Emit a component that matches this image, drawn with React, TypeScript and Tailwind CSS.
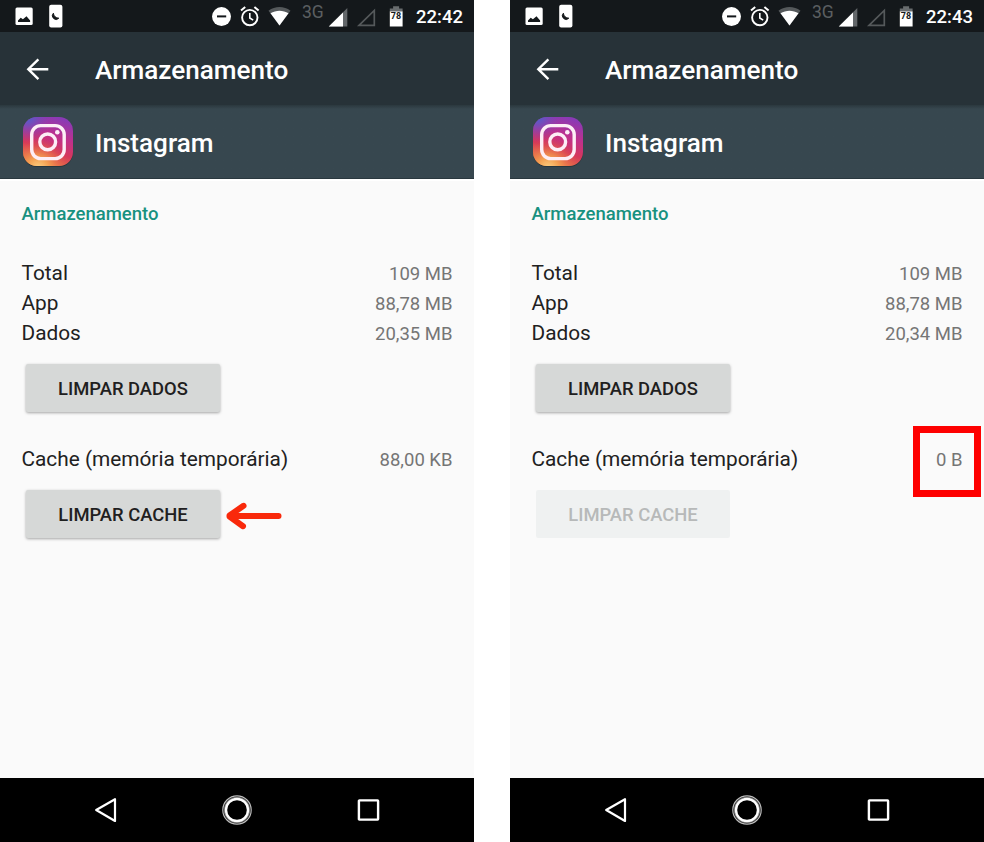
import clsx from 'clsx';

interface StorageInfo {
  time: string;
  total: string;
  app: string;
  data: string;
  cache: string;
  cacheEmpty: boolean;
}

const SCREENS: StorageInfo[] = [
  { time: '22:42', total: '109 MB', app: '88,78 MB', data: '20,35 MB', cache: '88,00 KB', cacheEmpty: false },
  { time: '22:43', total: '109 MB', app: '88,78 MB', data: '20,34 MB', cache: '0 B', cacheEmpty: true },
];

function StatusBar({ time }: { time: string }) {
  return (
    <div className="flex h-8 shrink-0 items-start bg-[#14181b] text-white">
      <svg className="ml-[15px] h-8 w-[18px]" viewBox="0 0 18 32">
        <rect x="0.5" y="7.5" width="17.2" height="17.5" rx="1.5" fill="#fff" />
        <path d="M3 22v-1.4l2.7-2.8 2.2 1.5 3.6-3 3.6 4.2V22z" fill="#14181b" />
      </svg>
      <svg className="ml-4 h-8 w-[14px]" viewBox="0 0 14 32">
        <rect x="0.2" y="4.8" width="13.2" height="22.6" rx="2" fill="#fff" />
        <path d="M4.4 13.2a3.5 3.5 0 0 0 5.4 5 5.3 5.3 0 0 1-5.4-5z" fill="#14181b" stroke="#14181b" strokeWidth="1" strokeLinejoin="round" />
      </svg>

      {/* Do not disturb */}
      <svg className="ml-[148px] h-8 w-5" viewBox="0 0 20 32">
        <circle cx="10.5" cy="16.6" r="9.5" fill="#fff" />
        <path d="M6 16.4h9.2" stroke="#14181b" strokeWidth="2" />
      </svg>
      {/* Alarm */}
      <svg className="ml-[9px] h-8 w-5" viewBox="0 0 20 32" fill="none" stroke="#fff">
        <circle cx="9.8" cy="17.6" r="7.7" strokeWidth="1.9" />
        <path d="M9.8 13v5l3.4 2.2" strokeWidth="1.6" />
        <path d="M1 10.6l4.2-3.5M18.6 10.6l-4.2-3.5" strokeWidth="2" />
      </svg>
      {/* Wi-Fi */}
      <svg className="ml-2 h-8 w-[23px]" viewBox="0 0 23 32">
        <path d="M0.5 10.8C7 5.8 16 5.8 22.5 10.8L11.5 25.6z" fill="#55595b" />
        <path d="M2.5 13.2C8 9.8 15 9.8 20.5 13.2L11.5 25.6z" fill="#fff" />
      </svg>
      <span className="ml-[11px] mt-[2px] w-[21px] text-[17.5px] leading-5 text-[#5b5f61]">3G</span>
      <svg className="ml-[5px] h-8 w-5" viewBox="0 0 20 32">
        <path d="M0.8 26.6L19.3 8v18.6z" fill="#63676a" />
        <path d="M0.8 26.6L15 12.5v14.1z" fill="#fff" />
      </svg>
      <svg className="ml-2 h-8 w-5" viewBox="0 0 20 32">
        <path d="M3 25.4L18.3 10.4v15z" fill="none" stroke="#55595b" strokeWidth="1.7" />
      </svg>
      {/* Battery */}
      <div className="relative ml-[13px] h-8 w-[14px]">
        <svg className="h-8 w-[14px]" viewBox="0 0 14 32">
          <path d="M0.8 12V8.5h3.3V6.3h6v2.2h3.5V12z" fill="#686c6e" />
          <path d="M0.8 11.5h12.8v15H0.8z" fill="#fff" />
        </svg>
        <span className="absolute left-0 top-[11px] w-[14px] text-center text-[9px] font-bold leading-[10px] text-[#14181b]">78</span>
      </div>
      <span className="ml-[13px] mt-[6px] text-[18.5px] font-medium leading-[22px]">{time}</span>
    </div>
  );
}

function InstagramIcon({ id }: { id: string }) {
  return (
    <svg className="size-[50px]" viewBox="0 0 50 50">
      <defs>
        <linearGradient id={`${id}-base`} x1="0.65" y1="0" x2="0.3" y2="1">
          <stop offset="0" stopColor="#8a3ab5" />
          <stop offset="0.35" stopColor="#c0308c" />
          <stop offset="0.65" stopColor="#d6385a" />
          <stop offset="1" stopColor="#f08a40" />
        </linearGradient>
        <radialGradient id={`${id}-warm`} cx="0.3" cy="1.05" r="0.62">
          <stop offset="0" stopColor="#fdd383" />
          <stop offset="0.35" stopColor="#f4a052" />
          <stop offset="1" stopColor="#e04a45" stopOpacity="0" />
        </radialGradient>
        <radialGradient id={`${id}-cool`} cx="0.08" cy="0" r="0.5">
          <stop offset="0" stopColor="#4964d2" />
          <stop offset="1" stopColor="#7441bd" stopOpacity="0" />
        </radialGradient>
      </defs>
      <rect y="1" width="50" height="49" rx="14" fill="#27363d" />
      <rect width="50" height="49" rx="14" fill={`url(#${id}-base)`} />
      <rect width="50" height="49" rx="14" fill={`url(#${id}-warm)`} />
      <rect width="50" height="49" rx="14" fill={`url(#${id}-cool)`} />
      <rect x="8.7" y="8.6" width="32.5" height="33" rx="9" fill="none" stroke="#fdeef6" strokeWidth="3.4" />
      <circle cx="24.7" cy="24.9" r="7.9" fill="none" stroke="#fdeef6" strokeWidth="3.4" />
      <circle cx="34.3" cy="15.3" r="2.3" fill="#fdeef6" />
    </svg>
  );
}

function Row({ label, value, highlight }: { label: string; value: string; highlight?: boolean }) {
  return (
    <div className="flex h-[30px] items-center justify-between">
      <span className="mt-[2px] text-[20.8px] text-[#212121]">{label}</span>
      <span className="relative mt-[3px] text-[18.5px] text-[#757575]">
        {value}
        {highlight && (
          <span className="absolute -right-[18px] -top-[21px] h-[71px] w-[68px] border-[7px] border-[#fe0000]" />
        )}
      </span>
    </div>
  );
}

function ActionButton({ label, disabled }: { label: string; disabled?: boolean }) {
  return (
    <button
      disabled={disabled}
      className={clsx(
        'h-12 w-[194px] rounded-[2px] pt-[2px] text-[18.4px] font-medium',
        disabled
          ? 'bg-[#eff1f1] text-[#b7b9b9]'
          : 'bg-[#d6d8d7] text-[#1f2020] shadow-[0_1px_3px_rgba(0,0,0,0.35)]'
      )}
    >
      {label}
    </button>
  );
}

function NavBar() {
  return (
    <div className="flex h-16 shrink-0 items-center bg-black pl-[94px]">
      <svg className="size-6" viewBox="0 0 24 24" fill="none" stroke="#fff" strokeWidth="2.2">
        <path d="M2.2 12L21 1.2v21.8z" strokeLinejoin="round" />
      </svg>
      <svg className="ml-[103px] size-8" viewBox="0 0 32 32" fill="none" stroke="#fff">
        <circle cx="16" cy="16" r="14.2" stroke="#bdbdbd" strokeWidth="1.2" />
        <circle cx="16" cy="16" r="12.5" stroke="#777" strokeWidth="1.4" />
        <circle cx="16" cy="16" r="11" strokeWidth="2.4" />
      </svg>
      <svg className="ml-[103px] size-6" viewBox="0 0 24 24" fill="none" stroke="#fff" strokeWidth="2.4">
        <rect x="2.9" y="2.4" width="19.2" height="19.2" rx="0.5" />
      </svg>
    </div>
  );
}

function PhoneScreen({ info }: { info: StorageInfo }) {
  return (
    <section className="flex h-[842px] w-[474px] flex-col bg-[#fafafa]">
      <StatusBar time={info.time} />

      {/* App bar */}
      <header className="flex h-[73px] shrink-0 items-center bg-[#273238] text-white">
        <svg className="ml-[26px] h-6 w-[23px]" viewBox="0 0 23 24" fill="none" stroke="#fff" strokeWidth="2.4">
          <path d="M22.3 12.2H2.6M12.4 2.3L2.3 12.2l10.1 9.9" />
        </svg>
        <h1 className="ml-[46px] mt-1 text-[26.1px] font-medium">Armazenamento</h1>
      </header>
      <div className="flex h-[74px] shrink-0 items-center border-b border-[#2a383f] bg-[#37474f] bg-linear-to-b from-[#2b383e] to-[#37474f] to-[4px] text-white">
        <div className="ml-[23px]">
          <InstagramIcon id={`ig-${info.cacheEmpty ? 'after' : 'before'}`} />
        </div>
        <h2 className="ml-[22px] mt-[5px] text-[26.1px] font-medium">Instagram</h2>
      </div>

      <main className="flex-1 border-t-2 border-white pl-[21.5px] pr-[21.5px] pt-[21px]">
        <h3 className="text-[18.5px] font-medium leading-6 text-[#18917f]">Armazenamento</h3>
        <div className="mt-8">
          <Row label="Total" value={info.total} />
          <Row label="App" value={info.app} />
          <Row label="Dados" value={info.data} />
        </div>
        <div className="ml-[4.5px] mt-4 flex">
          <ActionButton label="LIMPAR DADOS" />
        </div>
        <div className="mt-8">
          <Row label="Cache (memória temporária)" value={info.cache} highlight={info.cacheEmpty} />
        </div>
        <div className="ml-[4.5px] mt-4 flex items-center">
          <ActionButton label="LIMPAR CACHE" disabled={info.cacheEmpty} />
          {!info.cacheEmpty && (
            <svg className="ml-[5px] mt-[3px] h-8 w-[58px]" viewBox="0 0 58 32" fill="none" stroke="#f9290b" strokeWidth="6" strokeLinecap="round" strokeLinejoin="round">
              <path d="M4.5 16h49M18.5 5.8L4.5 15.5v1l13.5 9.7" />
            </svg>
          )}
        </div>
      </main>

      <NavBar />
    </section>
  );
}

export default function App() {
  return (
    <div className="flex h-[842px] w-[984px] gap-9 overflow-hidden bg-white font-['Roboto',sans-serif]">
      {SCREENS.map((info) => (
        <PhoneScreen key={info.time} info={info} />
      ))}
    </div>
  );
}
